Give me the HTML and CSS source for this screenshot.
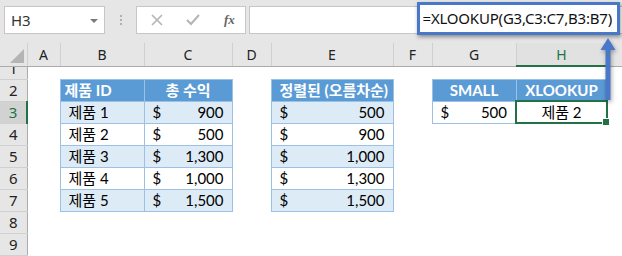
FILE: index.html
```html
<!DOCTYPE html>
<html>
<head>
	<meta charset="utf-8">
	<title>XLOOKUP</title>
	<link rel="stylesheet" href="styles.css">
</head>
<body>

<div class="app">

	<!-- 수식 입력줄 -->
	<div class="bar">
		<div class="namebox"><span>H3</span><i class="caret"></i></div>
		<div class="grip"><i></i><i></i><i></i></div>
		<div class="fxbox">
			<svg width="12" height="12" viewBox="0 0 12 12"><path d="M1 1 L11 11 M11 1 L1 11" stroke="#b4b4b4" stroke-width="1.6" fill="none"/></svg>
			<svg width="14" height="12" viewBox="0 0 14 12"><path d="M1 6 L5 10 L13 1" stroke="#b4b4b4" stroke-width="2" fill="none"/></svg>
			<span class="fx">fx</span>
		</div>
		<div class="formula"><span class="hl">=XLOOKUP(G3,C3:C7,B3:B7)</span></div>
	</div>

	<!-- 시트 -->
	<table class="sheet">
		<colgroup>
			<col style="width:27px"><col style="width:33px"><col style="width:84px"><col style="width:88px">
			<col style="width:39px"><col style="width:122px"><col style="width:39px"><col style="width:84px">
			<col style="width:91px"><col style="width:15px">
		</colgroup>
		<tr class="cols">
			<th class="corner"><i class="tri"></i></th>
			<th>A</th><th>B</th><th>C</th><th>D</th><th>E</th><th>F</th><th>G</th><th class="sel">H</th><th></th>
		</tr>
		<tr class="r1">
			<th class="rh"><div class="cut"><span>1</span></div></th>
			<td></td><td></td><td></td><td></td><td></td><td></td><td></td><td></td><td></td>
		</tr>
		<tr>
			<th class="rh">2</th>
			<td></td><td class="hd left">제품 ID</td><td class="hd">총 수익</td><td></td>
			<td class="hd">정렬된 (오름차순)</td><td></td>
			<td class="hd">SMALL</td><td class="hd">XLOOKUP</td><td></td>
		</tr>
		<tr>
			<th class="rh on">3</th>
			<td></td><td class="tb alt">제품 1</td><td class="tb alt money"><span>$</span><span>900</span></td><td></td>
			<td class="tb alt money"><span>$</span><span>500</span></td><td></td>
			<td class="tb money"><span>$</span><span>500</span></td><td class="tb cur">제품 2</td><td></td>
		</tr>
		<tr>
			<th class="rh">4</th>
			<td></td><td class="tb">제품 2</td><td class="tb money"><span>$</span><span>500</span></td><td></td>
			<td class="tb money"><span>$</span><span>900</span></td><td></td>
			<td></td><td></td><td></td>
		</tr>
		<tr>
			<th class="rh">5</th>
			<td></td><td class="tb alt">제품 3</td><td class="tb alt money"><span>$</span><span>1,300</span></td><td></td>
			<td class="tb alt money"><span>$</span><span>1,000</span></td><td></td>
			<td></td><td></td><td></td>
		</tr>
		<tr>
			<th class="rh">6</th>
			<td></td><td class="tb">제품 4</td><td class="tb money"><span>$</span><span>1,000</span></td><td></td>
			<td class="tb money"><span>$</span><span>1,300</span></td><td></td>
			<td></td><td></td><td></td>
		</tr>
		<tr>
			<th class="rh">7</th>
			<td></td><td class="tb alt">제품 5</td><td class="tb alt money"><span>$</span><span>1,500</span></td><td></td>
			<td class="tb alt money"><span>$</span><span>1,500</span></td><td></td>
			<td></td><td></td><td></td>
		</tr>
		<tr>
			<th class="rh">8</th>
			<td></td><td></td><td></td><td></td><td></td><td></td><td></td><td></td><td></td>
		</tr>
		<tr>
			<th class="rh">9</th>
			<td></td><td></td><td></td><td></td><td></td><td></td><td></td><td></td><td></td>
		</tr>
	</table>

	<!-- 화살표 -->
	<svg class="arrow" width="22" height="68" viewBox="0 0 22 68">
		<path d="M10 2 L17.5 14 L12.5 14 L12.5 64 L7.5 64 L7.5 14 L2.5 14 Z" fill="#4a78c8"/>
	</svg>

</div>

</body>
</html>
```

FILE: styles.css
```css
* { margin:0px; padding:0px; box-sizing:border-box; }
body { background:#fff; font-family:"Noto Sans", "Noto Sans CJK KR", sans-serif; }
.app { position:relative; width:622px; height:256px; overflow:hidden; background:#fff; }

/* 수식 입력줄 */
.bar { height:43px; background:#e6e6e6; display:flex; align-items:flex-start; padding:6px 0 0 4px; }
.namebox { width:101px; height:28px; background:#fff; border:1px solid #c6c6c6; display:flex; align-items:center; justify-content:space-between; padding:0 6px 0 6px; font-size:15px; color:#333; }
.caret { width:0px; height:0px; border-left:4px solid transparent; border-right:4px solid transparent; border-top:4px solid #7a7a7a; margin-top:1px; }
.grip { width:31px; height:28px; display:flex; flex-direction:column; align-items:center; justify-content:center; gap:2px; }
.grip i { display:block; width:2px; height:2px; background:#b0b0b0; }
.fxbox { width:110px; height:28px; background:#fff; border:1px solid #c6c6c6; display:flex; align-items:center; padding:0 0 0 14px; gap:0px; }
.fxbox svg:first-child { margin-right:23px; }
.fxbox svg:nth-child(2) { margin-right:24px; }
.fx { font:italic bold 13px "Liberation Serif", serif; color:#666; }
.formula { flex:1; height:28px; margin-left:3px; background:#fff; border:1px solid #c6c6c6; border-right:none; display:flex; justify-content:flex-end; align-items:flex-start; padding-right:2px; }
.hl { display:block; height:33px; margin-top:-5px; border:3px solid #4a78c8; background:#fff; box-shadow:1px 2px 4px rgba(0,0,0,0.4); font:15px/27px "Noto Sans", sans-serif; letter-spacing:-0.2px; color:#111; padding:0 5px 0 3px; white-space:nowrap; }

/* 시트 */
.sheet { table-layout:fixed; border-collapse:collapse; width:622px; font:15px/20px "Lato", "Noto Sans CJK KR", sans-serif; color:#000; }
.sheet td { height:22px; padding:0px 8px; white-space:nowrap; }
.cols th { height:23px; background:#e6e6e6; font:14px "Noto Sans", sans-serif; font-weight:normal; color:#222; border-right:1px solid #d0d0d0; border-bottom:1px solid #ababab; }
.cols th.sel { color:#217346; border-bottom:2px solid #217346; background:#e1e1e1; }
.corner { text-align:right; vertical-align:bottom; padding:0 3px 3px 0; }
.tri { display:inline-block; width:0px; height:0px; border-left:14px solid transparent; border-bottom:14px solid #b4b4b4; vertical-align:bottom; }
.rh { background:#e6e6e6; font:15px "Noto Sans", sans-serif; font-weight:normal; color:#222; text-align:center; border-right:1px solid #ababab; border-bottom:1px solid #d0d0d0; height:22px; }
.rh.on { background:#d2d2d2; color:#217346; border-right:2px solid #217346; }
.r1 td, .r1 th { height:13px; }
.cut { height:12px; overflow:hidden; }
.cut span { display:block; line-height:22px; margin-top:-10px; }

.hd { background:#5b9bd5; color:#fff; font-weight:bold; text-align:center; border:1px solid #9bc2e6; padding:0px 2px; }
.hd.left { text-align:left; padding-left:4px; }
.tb { border:1px solid #9bc2e6; padding-left:4px; }
.alt { background:#ddebf7; }
.money { padding:0 8px 0 10px; }
.money span:last-child { float:right; }
.cur { border:2px solid #217346; text-align:center; position:relative; }
.cur::after { content:""; position:absolute; right:-4px; bottom:-4px; width:6px; height:6px; background:#217346; border:1px solid #fff; }

.arrow { position:absolute; left:598px; top:36px; filter:drop-shadow(1px 2px 2px rgba(0,0,0,0.35)); }
```
